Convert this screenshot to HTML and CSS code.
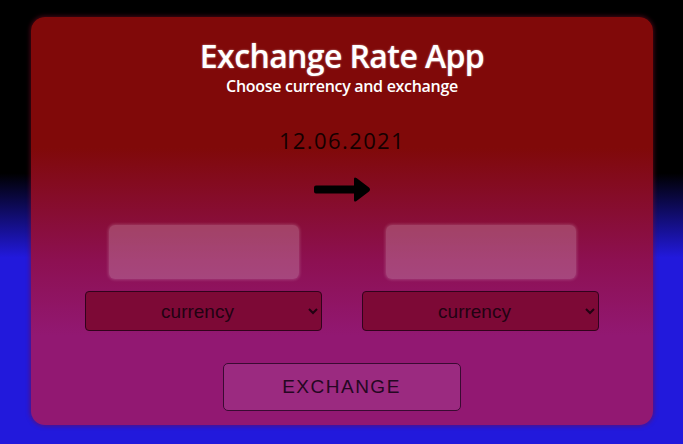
FILE: index.html
```html
<!DOCTYPE html>
<html lang="en">
<head>
<meta charset="utf-8">
<title>Exchange Rate App</title>
<link rel="stylesheet" href="styles.css">
</head>
<body>
<main class="card">
  <h1 class="title">Exchange Rate App</h1>
  <p class="subtitle">Choose currency and exchange</p>
  <p class="date">12.06.2021</p>
  <svg class="arrow" width="57" height="27" viewBox="0 0 57 27" aria-hidden="true">
    <path d="M2 9.5 H40 V3 Q40 0.5 42.5 2 L55 11.5 Q57 13.5 55 15.5 L42.5 25 Q40 26.5 40 24 V17.5 H2 Q0 17.5 0 15.5 V11.5 Q0 9.5 2 9.5 Z" fill="#000"/>
  </svg>
  <div class="columns">
    <div class="col">
      <div class="amount"></div>
      <select class="currency"><option>currency</option></select>
    </div>
    <div class="col">
      <div class="amount"></div>
      <select class="currency"><option>currency</option></select>
    </div>
  </div>
  <button class="exchange" type="button">EXCHANGE</button>
</main>
</body>
</html>
```
FILE: styles.css
```css
* { box-sizing: border-box; }
html, body { height: 100%; }
body {
  margin: 0;
  background: linear-gradient(#000 0, #000 39%, #2219dc 58%, #2219dc 100%);
  font-family: "Open Sans", sans-serif;
  padding: 17px 30px 19px 31px;
}
.card {
  height: 408px;
  border-radius: 14px;
  background: linear-gradient(#800909 0, #800909 32%, #8d1052 60%, #921872 78%, #921872 100%);
  box-shadow: 0 0 4px 1px rgba(128, 12, 40, 0.55);
  display: flex;
  flex-direction: column;
  align-items: center;
  padding-top: 20px;
}
.title {
  margin: 0;
  font-size: 32px;
  font-weight: 600;
  line-height: 38px;
  letter-spacing: -0.6px;
  color: #fff;
  text-shadow: 0 0 2px rgba(255,255,255,0.6);
}
.subtitle {
  margin: 2px 0 0;
  font-size: 16px;
  font-weight: 600;
  line-height: 19px;
  letter-spacing: -0.3px;
  color: #fff;
}
.date {
  margin: 31px 0 0;
  font-size: 22px;
  font-weight: 500;
  line-height: 26px;
  letter-spacing: 1.4px;
  color: #140000;
}
.arrow {
  display: block;
  margin-top: 23px;
  margin-left: 1px;
}
.columns {
  display: flex;
  gap: 40px;
  margin-top: 22px;
}
.col {
  width: 237px;
  display: flex;
  flex-direction: column;
  align-items: center;
  gap: 12px;
}
.amount {
  width: 190px;
  height: 54px;
  border-radius: 6px;
  background: rgba(255, 255, 255, 0.22);
  box-shadow: 0 0 3px 1px rgba(255, 255, 255, 0.18);
}
.currency {
  width: 237px;
  height: 40px;
  border: 1px solid #32021c;
  border-radius: 4px;
  background: #7d0936;
  color: #220212;
  font-family: "Liberation Sans", Arial, sans-serif;
  font-size: 19px;
  text-align: center;
  text-align-last: center;
}
.exchange {
  margin-top: 32px;
  width: 238px;
  height: 48px;
  border: 1px solid #3a0a32;
  border-radius: 5px;
  background: #9b2a80;
  color: #250722;
  font-family: "Liberation Sans", Arial, sans-serif;
  font-size: 19px;
  letter-spacing: 1.5px;
  margin-left: -1px;
}
```
